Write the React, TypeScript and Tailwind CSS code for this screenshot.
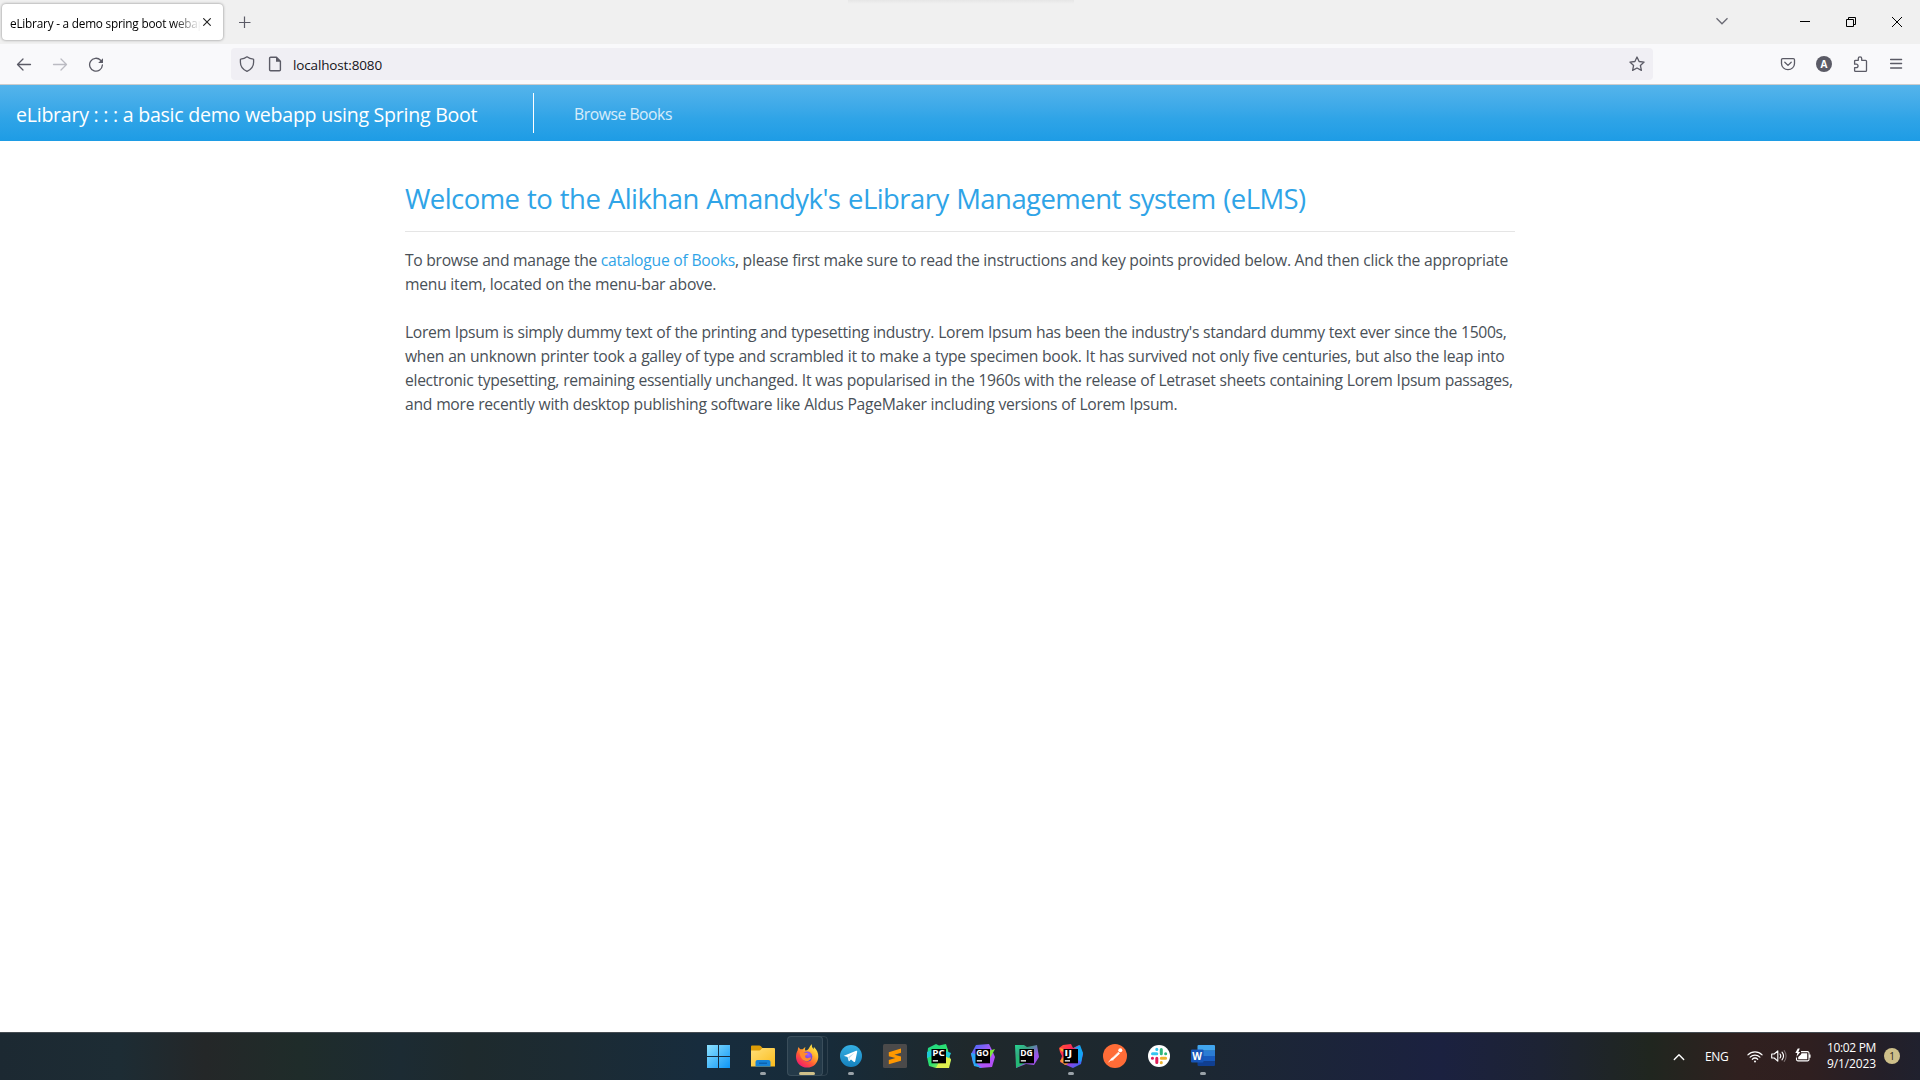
import type { ReactNode } from 'react';

function WindowBar() {
  return (
    <div className="relative flex h-11 shrink-0 items-start bg-[#f0f0f0]">
      <div className="absolute left-[848px] top-0 h-1 w-[226px] bg-linear-to-b from-[#e6e6e6] to-[#f0f0f0]" />
      <div className="ml-0.5 mt-1 flex h-9 w-[221px] items-center rounded-[4px] bg-white pl-2 shadow-[0_0_3px_rgba(0,0,0,0.45)]">
        <div className="w-[191px] overflow-hidden whitespace-nowrap bg-linear-to-r from-black from-85% to-transparent bg-clip-text pt-px text-[11.8px] leading-5 tracking-[-0.22px] text-transparent">
          eLibrary - a demo spring boot webap
        </div>
        <svg className="ml-0.5 size-2" viewBox="0 0 8 8" fill="none" stroke="#222" strokeWidth="1.1">
          <path d="M.3.3l7.4 7.4M7.7.3L.3 7.7" />
        </svg>
      </div>
      <svg className="ml-4 mt-4 size-3" viewBox="0 0 12 12" fill="none" stroke="#5b5b66" strokeWidth="1.2">
        <path d="M5.5 0.5v11.500M0 6.500h11.5" />
      </svg>
      <svg className="ml-auto mt-[17px] h-2 w-3" viewBox="0 0 12 8" fill="none" stroke="#6a6a74" strokeWidth="1.3">
        <path d="M.5 1.3L6 6.8l5.500-5.5" />
      </svg>
      <div className="ml-[72px] mt-[21px] h-px w-2.5 bg-black" />
      <svg className="ml-9 mt-[17px] size-2.5" viewBox="0 0 10 10" fill="none" stroke="#000">
        <path d="M.5 2.5h7v7h-7zM2.500 2V.5h7v7H8" />
      </svg>
      <svg className="ml-9 mr-[18px] mt-[17px] size-2.5" viewBox="0 0 10 10" fill="none" stroke="#000">
        <path d="M0 0l10 10M10 0L0 10" />
      </svg>
    </div>
  );
}

function Toolbar() {
  return (
    <div className="flex h-[41px] shrink-0 items-center border-b border-[#cccccc] bg-[#f9f9fb] text-[#5b5b66]">
      <svg className="ml-4 size-4" viewBox="0 0 16 16" fill="none" stroke="currentColor" strokeWidth="1.3" strokeLinecap="round" strokeLinejoin="round">
        <path d="M14.500 8.500h-13M7 3L1.500 8.500 7 14" />
      </svg>
      <svg className="ml-5 size-4 text-[#bbbbc2]" viewBox="0 0 16 16" fill="none" stroke="currentColor" strokeWidth="1.3" strokeLinecap="round" strokeLinejoin="round">
        <path d="M1.500 8.500h13M9 3l5.500 5.500L9 14" />
      </svg>
      <svg className="ml-5 size-4" viewBox="0 0 16 16" fill="none" stroke="currentColor" strokeWidth="1.3" strokeLinecap="round">
        <path d="M12.600 4.200A6.400 6.400 0 1 0 14.400 9" />
        <path d="M15 2.200v4.300a.5.5 0 0 1-.5.5h-4.300z" fill="currentColor" stroke="none" />
      </svg>
      <div className="ml-[127px] flex h-8 w-[1422px] items-center rounded-[4px] bg-[#f0eff4]">
        <svg className="ml-2 size-4" viewBox="0 0 16 16" fill="none" stroke="currentColor" strokeWidth="1.3" strokeLinejoin="round">
          <path d="M8 .8c1.800 1.400 4 2.200 6.300 2.400.2 0 .3.200.3.300v2.700c0 4-2.500 7.300-6.600 9.100C3.900 13.500 1.400 10.200 1.400 6.200V3.500c0-.1.100-.3.300-.3C4 3 6.200 2.200 8 .8z" />
        </svg>
        <svg className="ml-3 size-4" viewBox="0 0 16 16" fill="none" stroke="currentColor" strokeWidth="1.4" strokeLinejoin="round">
          <path d="M9.500 1.200H3.600a1 1 0 0 0-1 1v11.500a1 1 0 0 0 1 1h8.800a1 1 0 0 0 1-1V5.200z" />
          <path d="M9 1v4.800h4.800z" fill="currentColor" stroke="none" />
        </svg>
        <span className="ml-2.5 pt-px text-[13.5px] leading-5 tracking-[-0.14px] text-[#15141a]">localhost:8080</span>
        <svg className="ml-auto mr-2 size-4" viewBox="0 0 16 16" fill="none" stroke="currentColor" strokeWidth="1.3" strokeLinejoin="round">
          <path d="M8 1l2.100 4.500 5 .6-3.700 3.400 1 4.900L8 12l-4.400 2.400 1-4.900L.9 6.100l5-.6z" />
        </svg>
      </div>
      <svg className="ml-[127px] size-4" viewBox="0 0 16 16" fill="none" stroke="currentColor" strokeWidth="1.3" strokeLinecap="round" strokeLinejoin="round">
        <path d="M2.700 2.600h10.600a1.200 1.200 0 0 1 1.200 1.200V7.500a6.500 6.200 0 0 1-13 0V3.800a1.200 1.200 0 0 1 1.200-1.200z" />
        <path d="M4.800 6.300L8 9.400l3.200-3.100" />
      </svg>
      <div className="ml-5 flex size-4 items-center justify-center rounded-full bg-[#5b5b66] text-[10px] font-bold text-white">A</div>
      <svg className="ml-5 size-4" viewBox="0 0 16 16" fill="none" stroke="currentColor" strokeWidth="1.3" strokeLinejoin="round">
        <path d="M6.300 4.300V2.600a1.700 1.700 0 0 1 3.400 0v1.700h3.900a.9.900 0 0 1 .9.900v9.200a.9.900 0 0 1-.9.900H3.500a.9.900 0 0 1-.9-.9v-2.700h1.700a1.700 1.700 0 0 0 0-3.500H2.600v-3a.9.900 0 0 1 .9-.9z" />
      </svg>
      <svg className="ml-5 size-4" viewBox="0 0 16 16" fill="none" stroke="currentColor" strokeWidth="1.3" strokeLinecap="round">
        <path d="M2.600 3.500h11M2.600 7.500h11M2.600 12h11" />
      </svg>
    </div>
  );
}

function Navbar() {
  return (
    <nav className="flex h-14 shrink-0 items-center bg-linear-to-b from-[#54b4eb] via-[#2fa4e7] via-60% to-[#1d9ce5]">
      <span className="ml-4 w-[517px] whitespace-nowrap pt-[3px] text-[19.600px] leading-[30px] tracking-[-0.265px] text-white">
        eLibrary : : : a basic demo webapp using Spring Boot
      </span>
      <div className="h-10 w-px bg-white" />
      <span className="ml-10 pt-0.5 text-[15.700px] leading-6 tracking-[-0.44px] text-white/80">Browse Books</span>
    </nav>
  );
}

function Content() {
  return (
    <main className="flex-1 bg-white pl-[405px] pt-[41px]">
      <div className="w-[1110px] whitespace-nowrap text-[15.700px] leading-6 text-[#495057]">
        <h2 className="text-[27.500px] leading-[34px] tracking-[-0.560px] text-[#2fa4e7] [word-spacing:1px]">
          Welcome to the Alikhan Amandyk's eLibrary Management system (eLMS)
        </h2>
        <hr className="mb-4 mt-[15px] border-[#e5e5e5]" />
        <p className="mb-6">
          <span className="tracking-[-0.296px]">To browse and manage the </span>
          <a className="tracking-[-0.240px] text-[#2fa4e7]">catalogue of Books</a>
          <span className="tracking-[-0.258px]">
            , please first make sure to read the instructions and key points provided below. And then click the appropriate
          </span>
          <br />
          <span className="tracking-[-0.255px]">menu item, located on the menu-bar above.</span>
        </p>
        <p className="[word-spacing:0.3px]">
          <span className="tracking-[-0.334px]">
            Lorem Ipsum is simply dummy text of the printing and typesetting industry. Lorem Ipsum has been the industry's standard dummy text ever since the 1500s,
          </span>
          <br />
          <span className="tracking-[-0.284px]">
            when an unknown printer took a galley of type and scrambled it to make a type specimen book. It has survived not only five centuries, but also the leap into
          </span>
          <br />
          <span className="tracking-[-0.321px]">
            electronic typesetting, remaining essentially unchanged. It was popularised in the 1960s with the release of Letraset sheets containing Lorem Ipsum passages,
          </span>
          <br />
          <span className="tracking-[-0.292px]">
            and more recently with desktop publishing software like Aldus PageMaker including versions of Lorem Ipsum.
          </span>
        </p>
      </div>
    </main>
  );
}

function Task({ children, mark }: { children: ReactNode; mark?: 'running' | 'active' }) {
  return (
    <div className="relative flex h-12 w-11 items-center justify-center">
      {mark === 'active' && (
        <>
          <div className="absolute left-[7px] top-1 h-10 w-[36px] rounded-[4px] border border-white/10" />
          <div className="absolute left-[2px] top-1 h-10 w-[36px] rounded-[4px] border border-white/10 bg-[#243a49]" />
          <div className="absolute left-3.5 top-10 h-[3px] w-4 rounded-full bg-[#cfc08a]" />
        </>
      )}
      {mark === 'running' && <div className="absolute left-[19px] top-10 h-[3px] w-1.5 rounded-full bg-[#9aa2a8]" />}
      <svg className="relative size-6" viewBox="0 0 24 24">
        {children}
      </svg>
    </div>
  );
}

function JetBrains({ id, label, stops, accent, shape }: { id: string; label: string; stops: string[]; accent: ReactNode; shape: string }) {
  return (
    <>
      <defs>
        <linearGradient id={id} x1="0" y1="0" x2="1" y2="1">
          {stops.map((c, i) => (
            <stop key={c} offset={i / (stops.length - 1)} stopColor={c} />
          ))}
        </linearGradient>
      </defs>
      <path d={shape} fill={`url(#${id})`} />
      {accent}
      <path d="M4.500 5H19v14.300H4.500z" fill="#000" />
      <text x="5.200" y="11.800" fill="#fff" fontSize="8" fontWeight="700" textLength={label === 'IJ' ? 8 : 12.5} lengthAdjust="spacingAndGlyphs" className="font-['Open_Sans',sans-serif]">
        {label}
      </text>
      <path d="M5.800 16.200h5.200v1.300H5.800z" fill="#fff" />
    </>
  );
}

function Apps() {
  return (
    <div className="flex">
      <Task>
        <defs>
          <linearGradient id="win" x1="0" y1="0" x2="24" y2="24" gradientUnits="userSpaceOnUse">
            <stop stopColor="#8fe3ff" />
            <stop offset="1" stopColor="#0a93f5" />
          </linearGradient>
        </defs>
        <path d="M0 1H11v11H0zM12 1h11v11H12zM0 13h11v11H0zM12 13h11v11H12z" fill="url(#win)" />
      </Task>
      <Task mark="running">
        <defs>
          <linearGradient id="folder" x1="0" y1="0" x2="1" y2="1">
            <stop stopColor="#ffe07a" />
            <stop offset="1" stopColor="#fcbc1c" />
          </linearGradient>
        </defs>
        <path d="M0 2.500a1 1 0 0 1 1-1h7.300c.6 0 1 .2 1.400.6L12 4.500V9H0z" fill="#dd9c07" />
        <path d="M0 6.500h8.300c.5 0 .9-.2 1.300-.5L11 4.300c.3-.3.600-.4 1-.4h11a1 1 0 0 1 1 1V22.500H0z" fill="url(#folder)" />
        <path d="M4.500 22.500V18a2 2 0 0 1 2-2h11a2 2 0 0 1 2 2v4.500z" fill="#1683d8" />
        <path d="M8 18.600h8v1.200H8z" fill="#0b5ca8" />
      </Task>
      <Task mark="active">
        <defs>
          <linearGradient id="fox" x1=".85" y1=".05" x2=".2" y2=".95">
            <stop stopColor="#fff04a" />
            <stop offset=".35" stopColor="#ffb02b" />
            <stop offset=".65" stopColor="#ff5a35" />
            <stop offset="1" stopColor="#f0196f" />
          </linearGradient>
          <radialGradient id="globe" cx=".6" cy=".3" r=".8">
            <stop stopColor="#a45cff" />
            <stop offset="1" stopColor="#4a3ac4" />
          </radialGradient>
        </defs>
        <path d="M17 .3c-.6 2.100.3 3.500 1.700 4.900-.1-.9 0-1.500.3-2.200 2.900 2.700 4.500 6 4.300 10C23 19.300 18.300 23.600 12.200 23.600 5.900 23.600 1 18.900 1 12.700c0-2.500.6-4.600 1.700-6.500 0-1.100.3-2.200 1-3.100.4 1 .9 1.600 1.600 2.200.8-.2 1.700-.2 2.500 0 .7-1 1.600-1.800 2.800-2.100-.7 1.200-.7 2.200-.3 3.200 2 .2 2.600-.5 3.800-2.300C14.800 2.900 15.500 1.300 17 .3z" fill="url(#fox)" />
        <circle cx="12.300" cy="12.600" r="5" fill="url(#globe)" />
        <path d="M4.500 7.500c2-.6 3.600.1 4.600 1.200 1.600-.2 3.200 0 3.900.7-.5 1.200-2.200 1.300-2.800 2.300-.3 1.500.6 2.600 2.400 2.500 1.300-.1 2.100-1 3.600-.4-1 2.600-3.300 4-5.800 3.300C6.800 16 4.600 12 4.500 7.500z" fill="#ff8a2e" />
      </Task>
      <Task mark="running">
        <defs>
          <linearGradient id="tg" x1="0" y1="0" x2="0" y2="1">
            <stop stopColor="#34afe3" />
            <stop offset="1" stopColor="#1681bd" />
          </linearGradient>
        </defs>
        <circle cx="12" cy="12" r="11" fill="url(#tg)" />
        <path d="M5 11.700l12.200-4.900c.7-.2 1.100.1 1 .9l-2 9.600c-.2.700-.6.900-1.200.6l-3-2.300-1.600 1.500c-.3.300-.6.300-.7-.2l-1.200-3.800-3.300-1c-.5-.1-.5-.3-.2-.4z" fill="#fff" />
        <path d="M9.200 13.100l6.400-4.300-5 5-.3 2.700z" fill="#b9d9ea" />
      </Task>
      <Task>
        <rect width="24" height="24" rx="1.500" fill="#4b4a4a" />
        <path d="M5.800 8.300L18 4.500v4.300l-6.500 2 6.500 1.800v4.100L5.800 20.200v-4.100l6.600-2-6.600-1.900z" fill="#ff9800" />
      </Task>
      <Task>
        <JetBrains
          id="pc"
          label="PC"
          stops={['#21d789', '#2be06f', '#fcf84a']}
          shape="M1 4L9 0l3 1.500L19 0l2 6 1 6 2 4-2 8H9l-7-2-2-9z"
          accent={
            <>
              <path d="M19 7l5 2-2 5-3-1zM0 8l5-2v6l-5 2z" fill="#1fc8d6" />
              <path d="M19 13l5 2-3 9H9l3-6z" fill="#dff04e" />
            </>
          }
        />
      </Task>
      <Task>
        <JetBrains
          id="go"
          label="GO"
          stops={['#3b6cf7', '#a85af5', '#b74af7']}
          shape="M5 1l13-1 3 6 3 7-3 10-12 1-7-5-2-9z"
          accent={
            <>
              <path d="M17 7l7-2-5 9z" fill="#7be83c" />
              <path d="M0 9l5 1 1 10 5 4-8-2z" fill="#2aa6f5" />
            </>
          }
        />
      </Task>
      <Task>
        <JetBrains
          id="dg"
          label="DG"
          stops={['#22d88f', '#3e9b82', '#9b55ec', '#a34be0']}
          shape="M0 1h9l3 2 10-2 2 12-5 8-8-1-10 4z"
          accent={<path d="M1 10l4 3 5 6-9 5z" fill="#25b877" />}
        />
      </Task>
      <Task mark="running">
        <JetBrains
          id="ij"
          label="IJ"
          stops={['#ff5a2f', '#fe2857', '#8b45e8', '#087cfa']}
          shape="M0 4l4-3 8-1 2 4 6-3 4 9-2 10-8 4-7-3-6-3 2-6-2-4z"
          accent={
            <>
              <path d="M15 4l6-3 3 8-2 9-3-2V5z" fill="#13a6f5" />
              <path d="M5 12l-4 5 5 4 3-1zM1 4l4 1v3l-3-1z" fill="#ff9a35" />
            </>
          }
        />
      </Task>
      <Task>
        <circle cx="12" cy="12" r="12" fill="#ff6c37" />
        <circle cx="17.300" cy="6.300" r="2" fill="#fff" />
        <path d="M15.300 7.800l1.700 1.600-6.700 6.300-3.800 1.200 1.700-2.500z" fill="#fff" />
        <path d="M5.500 18.300l3-3.300M8 16h2.500" stroke="#fff" strokeWidth=".8" />
        <path d="M15.500 8l-6 5.700" stroke="#ff6c37" strokeWidth=".5" />
      </Task>
      <Task>
        <circle cx="12" cy="12" r="11" fill="#fff" />
        <g strokeWidth="3" strokeLinecap="round" fill="none">
          <path d="M5.500 9.700h4.300M9.800 5.300v.1" stroke="#36c5f0" />
          <path d="M14.300 5.500v4.300M18.600 9.800h.1" stroke="#2eb67d" />
          <path d="M14.300 14.300h4.300M14.300 18.600v.1" stroke="#ecb22e" />
          <path d="M9.800 14.300v4.300M5.400 14.300h.1" stroke="#e01e5a" />
        </g>
      </Task>
      <Task mark="running">
        <path d="M6.500 2a1 1 0 0 1 1-1H23a1 1 0 0 1 1 1v4.700H6.500z" fill="#41a5ee" />
        <path d="M6.500 6.500H24V12H6.500z" fill="#2b7cd3" />
        <path d="M6.500 12H24v5.500H6.500z" fill="#185abd" />
        <path d="M6.500 17.300H24V21a1 1 0 0 1-1 1H7.500a1 1 0 0 1-1-1z" fill="#103f91" />
        <rect x="0" y="5.500" width="12.500" height="13" rx="1" fill="#1756b8" />
        <text x="6.200" y="15.600" fill="#fff" fontSize="10" fontWeight="700" textAnchor="middle" className="font-['Open_Sans',sans-serif]">
          W
        </text>
      </Task>
    </div>
  );
}

function Tray() {
  return (
    <div className="flex items-center justify-end text-white">
      <svg className="h-2 w-3" viewBox="0 0 12 8" fill="none" stroke="currentColor" strokeWidth="1.400" strokeLinecap="round" strokeLinejoin="round">
        <path d="M1.300 6.400L6 1.700l4.700 4.700" />
      </svg>
      <span className="ml-5 w-[42px] text-[12px] leading-4 tracking-[-0.300px]">ENG</span>
      <svg className="size-4" viewBox="0 0 16 16" fill="none" stroke="currentColor" strokeWidth="1.200" strokeLinecap="round">
        <path d="M.9 5.800a10 10 0 0 1 14.200 0M3.100 8.100a7 7 0 0 1 9.800 0M5.300 10.300a3.900 3.900 0 0 1 5.400 0" />
        <circle cx="8" cy="12.500" r="1" fill="currentColor" stroke="none" />
      </svg>
      <svg className="-mt-px ml-2 size-4" viewBox="0 0 16 16" fill="none" stroke="currentColor" strokeWidth="1.100" strokeLinecap="round" strokeLinejoin="round">
        <path d="M.7 6v4h2.500l3.600 3.200V2.800L3.200 6z" />
        <path d="M9 6a3.200 3.200 0 0 1 0 4M11 4.200a6 6 0 0 1 0 7.600" />
        <path d="M13.200 2.600a8.600 8.600 0 0 1 0 10.800" opacity=".35" />
      </svg>
      <svg className="-mt-px ml-2 size-4" viewBox="0 0 16 16" fill="none" stroke="currentColor" strokeWidth="1.100" strokeLinejoin="round">
        <path d="M6 3.600h6.500a1.500 1.500 0 0 1 1.500 1.500v6.300a1.500 1.500 0 0 1-1.500 1.500H3a1.500 1.500 0 0 1-1.500-1.500V9.500M15 6.500v3.300" />
        <path d="M6.500 5.300h5.700v6H3.200V9l2.700-2.500z" fill="currentColor" stroke="none" />
        <path d="M2.800.6L.3 5h2L1.500 8.700 5.300 4h-2L4.800.6z" fill="currentColor" stroke="none" />
      </svg>
      <div className="-mt-0.5 ml-[15px] flex w-[50px] flex-col items-end whitespace-nowrap text-[12px] leading-4">
        <span className="tracking-[-0.340px]">10:02 PM</span>
        <span className="tracking-[-0.120px]">9/1/2023</span>
      </div>
      <div className="-mt-px ml-2 mr-5 flex size-4 items-center justify-center rounded-full bg-[#cfc08a] text-[10px] text-[#2c2818]">1</div>
    </div>
  );
}

function Taskbar() {
  return (
    <footer className="flex h-12 shrink-0 justify-between border-t border-[#454c52] bg-[linear-gradient(90deg,#1c2932_0px,#1d2c34_120px,#242728_205px,#1f2c2a_300px,#1c2b33_400px,#1e2a2d_470px,#1c2b33_570px,#172c3d_700px,#172b39_830px,#1f282b_970px,#1c2831_1180px,#1b2140_1440px,#1d2334_1540px,#20261f_1650px,#30201f_1740px,#2f1f20_1810px,#241f28_1880px,#20212e_1920px)] pl-[697px]">
      <div className="-mt-px">
        <Apps />
      </div>
      <Tray />
    </footer>
  );
}

export default function App() {
  return (
    <div className="flex h-[1080px] w-[1920px] flex-col overflow-hidden bg-white font-['Open_Sans','Noto_Sans',sans-serif]">
      <WindowBar />
      <Toolbar />
      <Navbar />
      <Content />
      <Taskbar />
    </div>
  );
}
